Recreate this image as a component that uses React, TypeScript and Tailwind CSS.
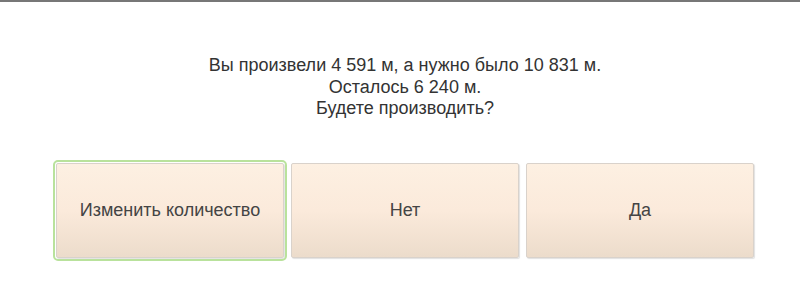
const buttons = ["Изменить количество", "Нет", "Да"]

export default function App() {
  return (
    <div className="h-[296px] w-[800px] border-t-2 border-[#777777] bg-white font-['Liberation_Sans',Arial,sans-serif] text-[#333333]">
      <div className="pl-[56px] pr-[46px]">
        <div className="pt-[53px] text-center text-[18px] leading-[21.5px]">
          <p>Вы произвели 4 591 м, а нужно было 10 831 м.</p>
          <p>Осталось 6 240 м.</p>
          <p>Будете производить?</p>
        </div>

        <div className="mt-[43px] flex gap-[7px]">
          {buttons.map((label, i) => (
            <button
              key={label}
              type="button"
              className={
                "flex h-[95px] flex-1 items-center justify-center rounded-[2px] border border-[#d9d2cb] bg-gradient-to-b from-[#fdf0e2] via-[#fbeadb] to-[#ecdccb] text-[18px] text-[#444444] shadow-[1px_1px_1px_rgba(0,0,0,0.12)] " +
                (i === 0 ? "outline-2 outline-offset-1 outline-[#b9e29c]" : "")
              }
            >
              {label}
            </button>
          ))}
        </div>
      </div>
    </div>
  )
}
